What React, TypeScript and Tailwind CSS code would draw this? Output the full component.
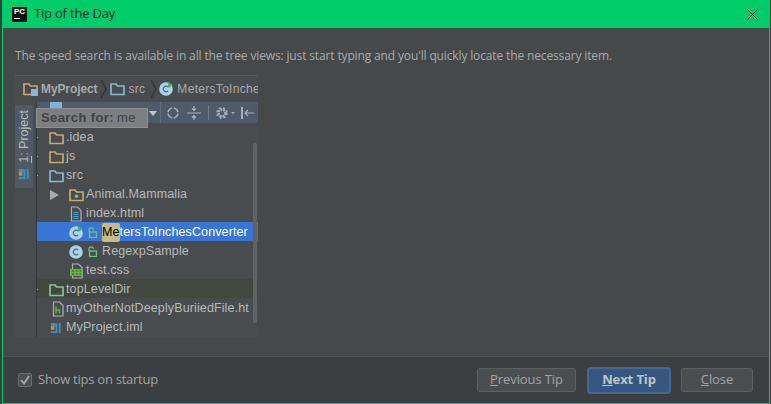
import React from "react";

const sans = "font-['Open_Sans','Liberation_Sans',sans-serif]";

function Folder({ color = "#c9a76f", dot = false, badge = false }: { color?: string; dot?: boolean; badge?: boolean }) {
  return (
    <svg width="15" height="14" viewBox="0 0 15 14" className="shrink-0">
      <path d="M1 12.5V2h5l1.5 2H14v8.5z" fill="none" stroke={color} strokeWidth="1.7" />
      {dot && <circle cx="7.5" cy="8.2" r="1.8" fill="#6fb3d8" />}
      {badge && <rect x="8" y="7" width="7" height="7" fill="#82b8d6" />}
    </svg>
  );
}

function ClassIcon({ run = false, size = 14 }: { run?: boolean; size?: number }) {
  return (
    <svg width={size} height={size} viewBox="0 0 14 14" className="shrink-0">
      <circle cx="7" cy="7" r="6.8" fill="#a9d4ec" />
      <path d="M9.2 5.2A2.8 2.8 0 1 0 9.2 8.8" fill="none" stroke="#4d6f86" strokeWidth="1.3" />
      {run && <path d="M9 0l5 3-5 3z" fill="#49b26a" />}
    </svg>
  );
}

function Lock() {
  return (
    <svg width="10" height="11" viewBox="0 0 10 11" className="shrink-0">
      <path d="M2 5V3a2.2 2.2 0 0 1 4.4 0" fill="none" stroke="#6cc27f" strokeWidth="1.2" />
      <rect x="2.5" y="5" width="7" height="5.5" fill="none" stroke="#6cc27f" strokeWidth="1.4" />
    </svg>
  );
}

function ImlIcon() {
  return (
    <svg width="12" height="12" viewBox="0 0 13 13" className="shrink-0">
      <path d="M1 1h5v4H1z" fill="#3f8fc4" />
      <circle cx="2.8" cy="6.6" r="2.2" fill="#d98a2b" />
      <path d="M1 11h6V1.5M10.5 1v11" fill="none" stroke="#3f8fc4" strokeWidth="2" />
    </svg>
  );
}

function FileIcon({ kind }: { kind: "html" | "css" | "h" }) {
  return (
    <svg width="14" height="16" viewBox="0 0 14 16" className="shrink-0">
      <path d="M2.5 1h6l3.5 3.5V15h-9.5z" fill="none" stroke="#a9b0b3" strokeWidth="1.2" />
      {kind === "html" && <path d="M4.5 6.5h5M4.5 8.5h5M4.5 10.5h5M4.5 12.5h5" stroke="#4aa3d6" strokeWidth="1" />}
      {kind === "h" && <path d="M5 5.5v7M5 9h3.5v3.5" fill="none" stroke="#62b543" strokeWidth="1.4" />}
      {kind === "css" && <rect x="0" y="6" width="13" height="7" fill="#62b543" />}
      {kind === "css" && <path d="M2 8h2M2 11h2M6 8h1.5M6 11h1.5M9.5 8h1.5M9.5 11h1.5" stroke="#2b4d22" strokeWidth="1" />}
    </svg>
  );
}

function Row({ pad, children, cls = "" }: { pad: string; children: React.ReactNode; cls?: string }) {
  return <div className={`flex h-[19px] items-center whitespace-nowrap pt-[2px] ${pad} ${cls}`}>{children}</div>;
}

function Dot() {
  return <span className="mr-[11px] h-[1px] w-[1px] shrink-0 bg-[#9a9ea0]" />;
}

function Chevron({ cls }: { cls: string }) {
  return (
    <svg width="7" height="20" viewBox="0 0 7 20" className={cls}>
      <path d="M1 1l5 9-5 9" fill="none" stroke="#2f3234" strokeWidth="1.2" />
    </svg>
  );
}

function DialogButton({ children, cls = "" }: { children: React.ReactNode; cls?: string }) {
  return (
    <div className={`flex h-[24px] items-center justify-center rounded-[3px] border border-[#5e6060] bg-[#4b4e50] text-[13px] tracking-[-0.1px] text-[#a0a4a6] ${cls}`}>
      {children}
    </div>
  );
}

export default function App() {
  return (
    <div className={`flex h-[404px] w-[771px] flex-col overflow-hidden bg-[#3c3f41] pl-[2px] pr-[1px] ${sans}`}>
      <div className="flex h-full flex-col border-x border-b border-[#00cc6a]">
        <div className="flex h-[28px] shrink-0 items-center bg-[#00cc6a] pl-[9px] pr-[11px] text-[13px] tracking-[-0.2px] text-[#16281f]">
          <div className="mr-[7px] flex h-[15px] w-[15px] flex-col bg-[#111] pl-[2px] font-['Liberation_Sans',sans-serif] text-[8px] font-bold leading-[10px] text-white">
            PC
            <span className="mt-[1px] h-[1px] w-[6px] bg-white" />
          </div>
          <span>Tip of the Day</span>
          <svg width="11" height="11" viewBox="0 0 11 11" className="ml-auto">
            <path d="M0.5 0.5l10 10M10.5 0.5l-10 10" stroke="#10241a" strokeWidth="1" />
          </svg>
        </div>

        <div className="flex min-h-0 flex-1 flex-col bg-[#45494a] pl-[12px]">
          <p className="mt-[18px] h-[19px] whitespace-nowrap text-[12px] leading-[19px] tracking-[-0.14px] text-[#a7abad]">
            The speed search is available in all the tree views: just start typing and you'll quickly locate the necessary item.
          </p>

          <div className="relative mt-[10px] h-[262px] w-[243px] overflow-hidden border-t border-[#55595a] bg-[#484c4e] font-['Liberation_Sans',sans-serif] text-[12px] text-[#b6babc]">
            <div className="flex h-[26px] items-center pl-[8px] whitespace-nowrap">
              <Folder badge />
              <span className="ml-[3px] font-bold tracking-[-0.1px] text-[#a6aaac]">MyProject</span>
              <Chevron cls="ml-[3px] mr-[3px] shrink-0" />
              <Folder color="#84b8d6" />
              <span className="ml-[3px] tracking-[0.3px] text-[#a6aaac]">src</span>
              <Chevron cls="ml-[5px] mr-[2px] shrink-0" />
              <ClassIcon run />
              <span className="ml-[4px] tracking-[0.3px] text-[#a6aaac]">MetersToInches</span>
            </div>

            <div className="flex h-[235px]">
              <div className="flex w-[22px] shrink-0 flex-col border-r border-[#35383a] pt-[3px]">
                <div className="flex h-[83px] w-[18px] flex-col items-center justify-end gap-[5px] rounded-r-[2px] bg-[#505a64] pb-[8px]">
                  <span className="text-[12.5px] leading-[15px] text-[#b6babc] [writing-mode:vertical-rl] rotate-180">
                    <span className="underline">1</span>: Project
                  </span>
                  <ImlIcon />
                </div>
              </div>

              <div className="relative flex min-w-0 flex-1 flex-col">
                <div className="flex h-[21px] shrink-0 items-center bg-[#4f5b69] pl-[123px] text-[#a9b0b5]">
                  <div className="mr-[5px] h-[21px] w-[1px] bg-[#5f6d7c]" />
                  <svg width="14" height="14" viewBox="0 0 14 14" className="shrink-0">
                    <circle cx="7" cy="7" r="5" fill="none" stroke="#a9b0b5" strokeWidth="1.6" />
                    <path d="M7 0v4M7 10v4M0 7h4M10 7h4" stroke="#4f5b69" strokeWidth="1.6" />
                  </svg>
                  <svg width="14" height="14" viewBox="0 0 14 14" className="ml-[7px] shrink-0">
                    <path d="M0 7h14M7 0v4M5 2.5l2 2 2-2M7 14v-4M5 11.5l2-2 2 2" fill="none" stroke="#a9b0b5" strokeWidth="1.2" />
                  </svg>
                  <div className="ml-[7px] h-[15px] w-[1px] shrink-0 bg-[#6d7a88]" />
                  <svg width="20" height="14" viewBox="0 0 20 14" className="ml-[7px] shrink-0">
                    <circle cx="6" cy="7" r="3.4" fill="none" stroke="#a9b0b5" strokeWidth="2.4" strokeDasharray="2 0.8" />
                    <circle cx="6" cy="7" r="5" fill="none" stroke="#a9b0b5" strokeWidth="1.6" strokeDasharray="2 2" />
                    <path d="M15 6h4l-2 2z" fill="#a9b0b5" />
                  </svg>
                  <svg width="13" height="14" viewBox="0 0 13 14" className="ml-[5px] shrink-0">
                    <path d="M1 1v12" stroke="#a9b0b5" strokeWidth="2" />
                    <path d="M4 7h9M4 7l3-3M4 7l3 3" fill="none" stroke="#a9b0b5" strokeWidth="1.2" />
                  </svg>
                </div>

                <div className="relative flex-1 overflow-hidden text-[12.5px] tracking-[0.12px]">
                  <Row pad="pl-0 mt-[4px]"><Dot /><Folder /><span className="ml-[2px]">.idea</span></Row>
                  <Row pad="pl-0"><Dot /><Folder /><span className="ml-[2px]">js</span></Row>
                  <Row pad="pl-0"><Dot /><Folder color="#84b8d6" /><span className="ml-[2px]">src</span></Row>
                  <Row pad="pl-[13px]">
                    <svg width="9" height="10" viewBox="0 0 9 10" className="mr-[10px] shrink-0"><path d="M0 0l9 5-9 5z" fill="#a9adaf" /></svg>
                    <Folder dot /><span className="ml-[2px]">Animal.Mammalia</span>
                  </Row>
                  <Row pad="pl-[32px]"><FileIcon kind="html" /><span className="ml-[3px]">index.html</span></Row>
                  <Row pad="pl-[32px]" cls="bg-[#3875d6] text-white">
                    <ClassIcon run />
                    <span className="ml-[4px] mr-[5px]"><Lock /></span>
                    <span className="rounded-[2px] bg-[#c8bb85] text-black">Me</span>
                    <span>tersToInchesConverter</span>
                  </Row>
                  <Row pad="pl-[32px]">
                    <ClassIcon />
                    <span className="ml-[4px] mr-[5px]"><Lock /></span>RegexpSample
                  </Row>
                  <Row pad="pl-[33px]"><FileIcon kind="css" /><span className="ml-[2px]">test.css</span></Row>
                  <Row pad="pl-0" cls="bg-[#40483f]"><Dot /><Folder color="#8ac28e" /><span className="ml-[2px]">topLevelDir</span></Row>
                  <Row pad="pl-[14px]"><FileIcon kind="h" /><span className="ml-[1px]">myOtherNotDeeplyBuriiedFile.ht</span></Row>
                  <Row pad="pl-[13px]"><ImlIcon /><span className="ml-[4px]">MyProject.iml</span></Row>
                  <div className="absolute right-[1px] top-[20px] h-[180px] w-[4px] rounded-[2px] bg-[#5f6365]" />
                </div>

                <svg width="12" height="8" viewBox="0 0 12 8" className="absolute left-[13px] top-0"><rect width="12" height="8" fill="#7fb4d2" /></svg>
                <svg width="8" height="5" viewBox="0 0 8 5" className="absolute left-[112px] top-[9px]"><path d="M0 0h8L4 5z" fill="#c4c8ca" /></svg>
                <div className="absolute left-0 top-[7px] flex h-[18px] w-[110px] items-center bg-[#7b7f80] pl-[4px] text-[13px] font-bold tracking-[0.4px] text-[#3f4344] outline outline-1 outline-[#8e9192]">
                  Search for: <span className="ml-[3px] font-normal">me</span>
                </div>
              </div>
            </div>
          </div>
        </div>

        <div className="flex h-[47px] shrink-0 items-center border-t border-[#505354] bg-[#3c3f41] pl-[15px] pr-[16px] text-[13px] tracking-[-0.25px] text-[#a0a4a6]">
          <div className="flex h-[14px] w-[14px] items-center justify-center rounded-[2px] border border-[#6a6d6e] bg-[#4c5052]">
            <svg width="10" height="10" viewBox="0 0 10 10"><path d="M1 5l3 3.5L9 1" fill="none" stroke="#a9adaf" strokeWidth="1.8" /></svg>
          </div>
          <span className="ml-[6px]">Show tips on startup</span>
          <DialogButton cls="ml-auto w-[99px]">
            <span><span className="underline">P</span>revious Tip</span>
          </DialogButton>
          <div className="ml-[11px] flex h-[27px] w-[84px] items-center justify-center rounded-[4px] border-2 border-[#46688f] bg-[#365880] text-[13px] font-bold tracking-[-0.1px] text-[#bfc5c9]">
            <span><span className="underline">N</span>ext Tip</span>
          </div>
          <DialogButton cls="ml-[10px] w-[72px]">
            <span><span className="underline">C</span>lose</span>
          </DialogButton>
        </div>
      </div>
    </div>
  );
}
